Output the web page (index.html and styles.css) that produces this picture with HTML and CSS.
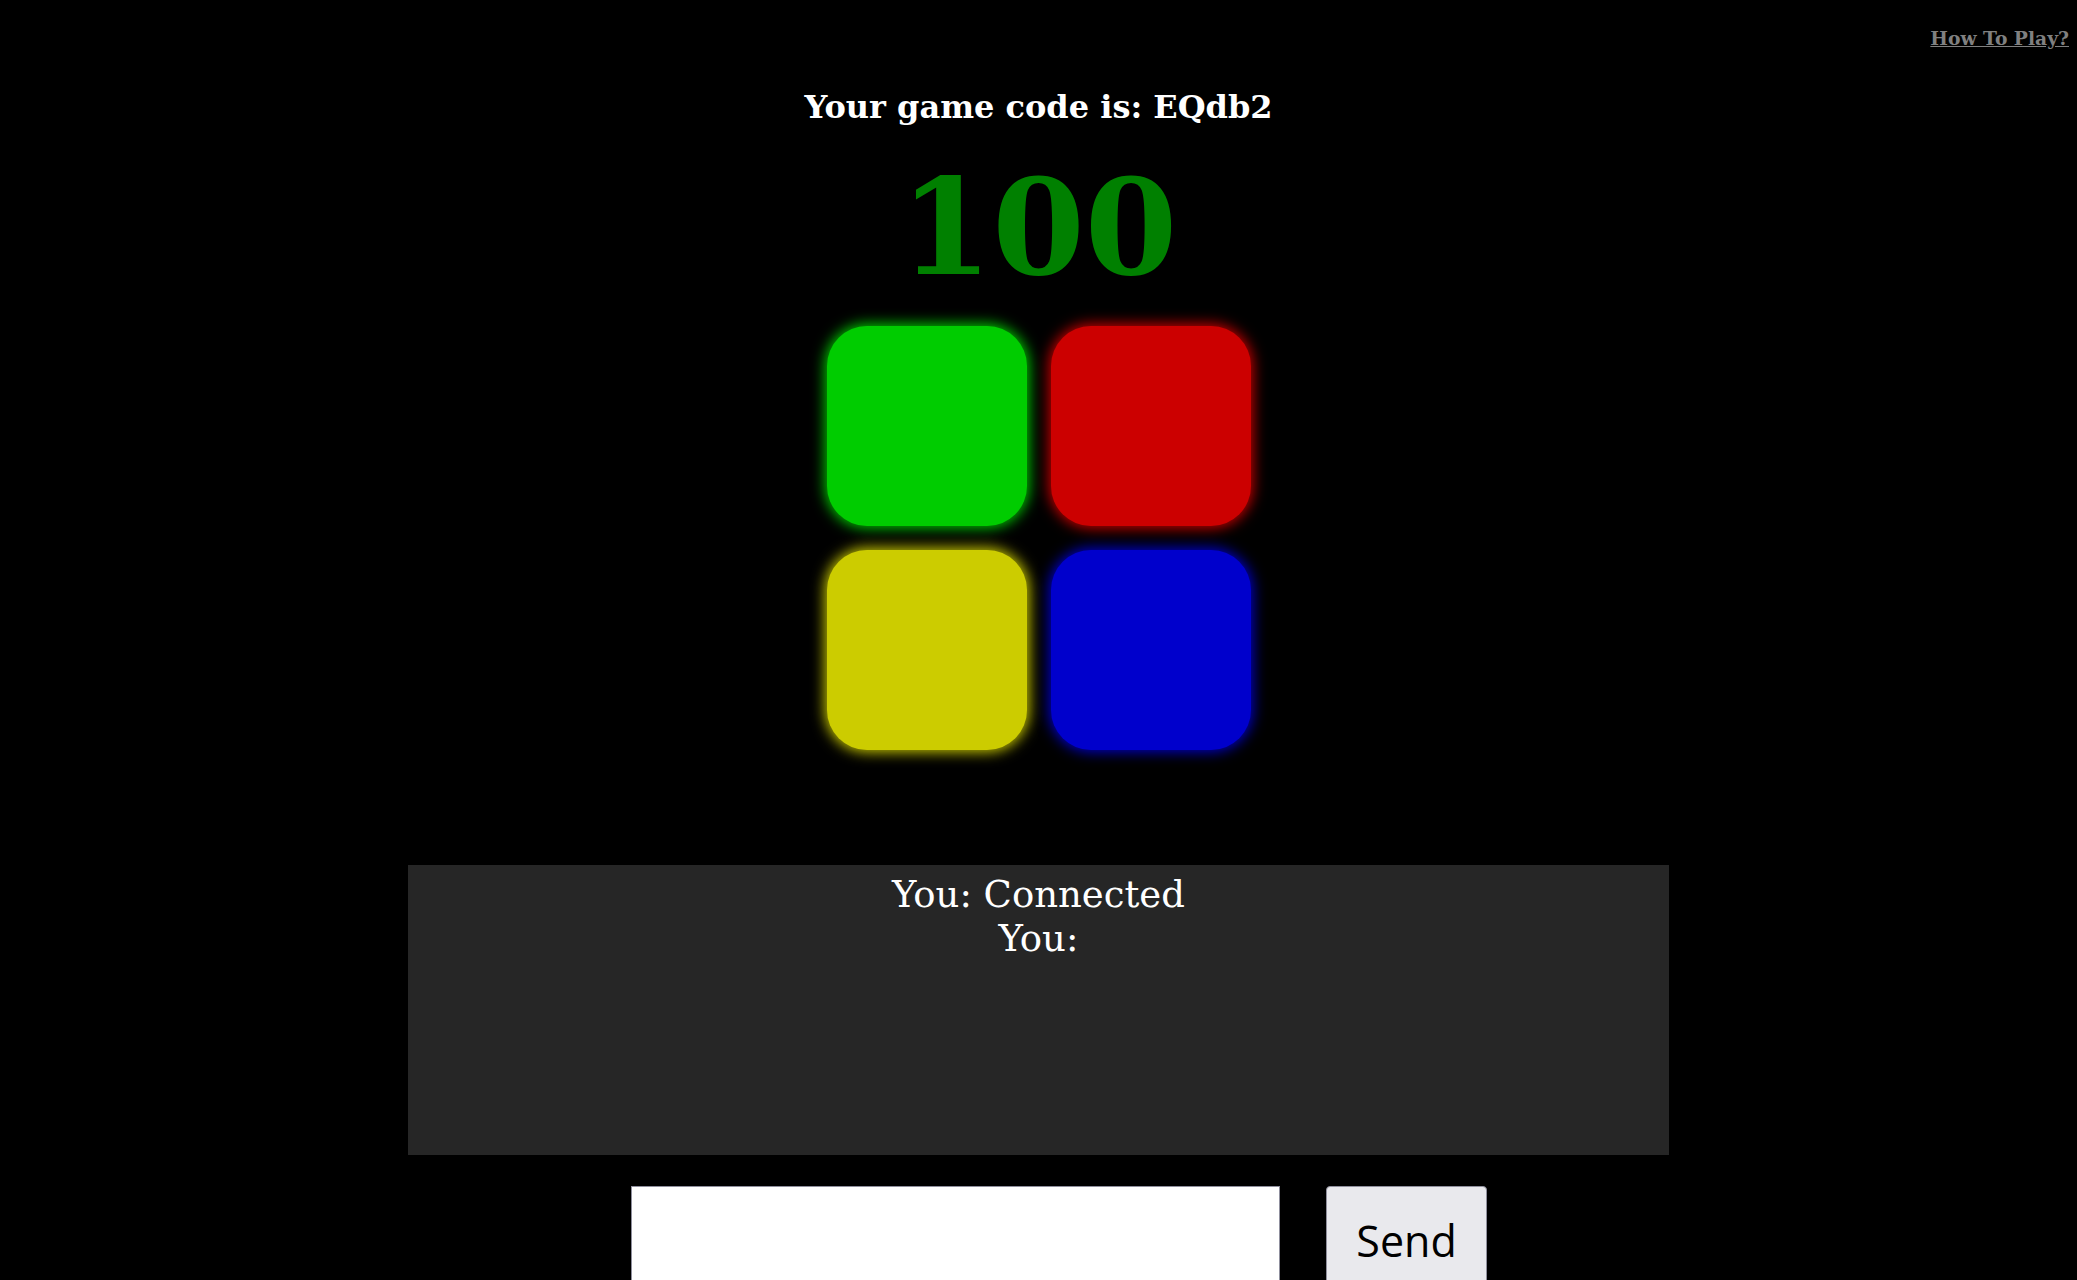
FILE: index.html
```html
<!DOCTYPE html>
<html lang="en">
<head>
<meta charset="utf-8">
<title>Simon Game</title>
<link rel="stylesheet" href="styles.css">
</head>
<body>
<a class="help" href="#">How To Play?</a>
<main class="game">
  <h1 class="code">Your game code is: EQdb2</h1>
  <div class="score">100</div>
  <div class="pads">
    <div class="pad pad-green"></div>
    <div class="pad pad-red"></div>
    <div class="pad pad-yellow"></div>
    <div class="pad pad-blue"></div>
  </div>
  <section class="chat">
    <div class="msg">You: Connected</div>
    <div class="msg">You:</div>
  </section>
  <form class="send-row">
    <input class="chat-input" type="text">
    <button class="send-btn" type="button">Send</button>
  </form>
</main>
</body>
</html>
```
FILE: styles.css
```css
html, body {
  margin: 0;
  padding: 0;
  background: #000;
  overflow: hidden;
}
body {
  font-family: "DejaVu Serif", serif;
  color: #fff;
  position: relative;
  height: 1280px;
}
.help {
  position: absolute;
  top: 27px;
  right: 8px;
  font-size: 18.72px;
  font-weight: bold;
  line-height: normal;
  color: #808080;
  text-decoration: underline;
}
.game {
  display: flex;
  flex-direction: column;
  align-items: center;
}
.code {
  margin: 88px 0 0;
  font-size: 32px;
  font-weight: bold;
  line-height: normal;
}
.score {
  margin-top: 23px;
  font-size: 133px;
  font-weight: bold;
  color: #008000;
  line-height: normal;
}
.pads {
  margin-top: 21px;
  display: grid;
  grid-template-columns: 200px 200px;
  grid-auto-rows: 200px;
  gap: 24px;
}
.pad {
  border-radius: 40px;
}
.pad-green { background: #00cc00; box-shadow: 0 0 14px 2px #00cc00; }
.pad-red { background: #cc0000; box-shadow: 0 0 14px 2px #cc0000; }
.pad-yellow { background: #cccc00; box-shadow: 0 0 14px 2px #cccc00; }
.pad-blue { background: #0000cc; box-shadow: 0 0 14px 2px #0000cc; }
.chat {
  margin-top: 115px;
  width: 1261px;
  height: 290px;
  box-sizing: border-box;
  padding-top: 8px;
  background: #262626;
  text-align: center;
  font-size: 37px;
  line-height: 44px;
}
.send-row {
  margin: 31px 0 0;
  display: flex;
  justify-content: center;
  gap: 46px;
  padding-left: 41px;
}
.chat-input {
  width: 649px;
  height: 104px;
  box-sizing: border-box;
  border: 1px solid #8f8f9d;
  border-radius: 0;
  background: #fff;
  margin: 0;
}
.send-btn {
  width: 161px;
  height: 104px;
  box-sizing: border-box;
  margin: 0;
  padding: 5px 0 0;
  border: 1px solid #8f8f9d;
  border-radius: 4px;
  background: #e9e9ed;
  color: #000;
  font-family: "Open Sans", "Noto Sans", sans-serif;
  font-size: 43px;
}
```
